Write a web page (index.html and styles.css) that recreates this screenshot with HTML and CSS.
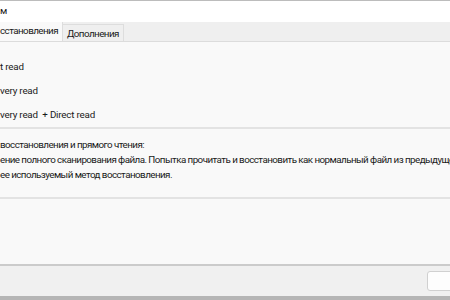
FILE: index.html
```
<!DOCTYPE html>
<html lang="ru">
<head>
  <meta charset="UTF-8">
  <title>Параметры восстановления</title>
  <link rel="stylesheet" href="styles.css">
</head>
<body>
  <div class="window">
    <div class="titlebar">м</div>

    <div class="tabs">
      <div class="tab active">сстановления</div>
      <div class="tab">Дополнения</div>
    </div>

    <div class="panel">
      <div class="options">
        <div class="option">t read</div>
        <div class="option">very read</div>
        <div class="option">very read&nbsp; + Direct read</div>
      </div>

      <div class="description">
        <div class="desc-line">восстановления и прямого чтения:</div>
        <div class="desc-line">ение полного сканирования файла. Попытка прочитать и восстановить как нормальный файл из предыдущей</div>
        <div class="desc-line">ее используемый метод восстановления.</div>
      </div>

      <div class="spacer"></div>
    </div>

    <div class="footer">
      <button class="button"></button>
    </div>
  </div>
</body>
</html>
```

FILE: styles.css
```
body {
  margin: 0;
  font-family: Roboto, sans-serif;
  font-size: 9.8px;
  letter-spacing: -0.55px;
  color: #1a1a1a;
  background: #f0f0f0;
  overflow: hidden;
}

.window {
  height: 300px;
  display: flex;
  flex-direction: column;
  box-sizing: border-box;
  border-top: 1px solid #bcbcbc;
  border-bottom: 4px solid #b5b5b5;
}

.titlebar {
  height: 21px;
  line-height: 20px;
  background: #fff;
  white-space: nowrap;
}

.tabs {
  height: 19px;
  display: flex;
  align-items: flex-end;
  background: #efefef;
  border-bottom: 1px solid #dcdcdc;
}

.tab {
  height: 16px;
  line-height: 17px;
  padding: 0 4px;
  border: 1px solid #dddddd;
  border-bottom: none;
  border-left: none;
  white-space: nowrap;
}

.tab.active {
  height: 19px;
  line-height: 17px;
  padding: 0 4px 0 0;
  background: #f9f9f9;
  border-top: none;
}

.panel {
  flex: 1;
  display: flex;
  flex-direction: column;
  background: #f9f9f9;
}

.options {
  height: 87px;
  padding-top: 13px;
  box-sizing: border-box;
  border-bottom: 2px solid #e3e3e3;
  letter-spacing: -0.2px;
}

.option {
  height: 24px;
  line-height: 24px;
  white-space: nowrap;
}

.description {
  height: 70px;
  padding-top: 8px;
  box-sizing: border-box;
  border-bottom: 2px solid #e3e3e3;
}

.desc-line {
  height: 15px;
  line-height: 15px;
  white-space: nowrap;
  overflow: hidden;
}

.spacer {
  flex: 1;
}

.footer {
  height: 32px;
  display: flex;
  align-items: center;
  justify-content: flex-end;
  border-top: 2px solid #cbcbcb;
  box-sizing: border-box;
  background: #f0f0f0;
}

.button {
  width: 30px;
  height: 20px;
  margin-right: -7px;
  background: #fdfdfd;
  border: 1px solid #d0d0d0;
  border-radius: 3px;
}
```
